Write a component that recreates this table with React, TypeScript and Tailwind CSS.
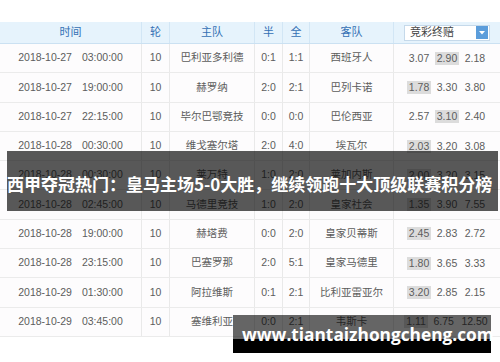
import React from "react";

type Row = {
  date: string;
  time: string;
  home: string;
  half: string;
  full: string;
  away: string;
  odds: [string, string, string];
  hi: number;
};

const rows: Row[] = [
  { date: "2018-10-27", time: "03:00:00", home: "巴利亚多利德", half: "0:1", full: "1:1", away: "西班牙人", odds: ["3.07", "2.90", "2.18"], hi: 1 },
  { date: "2018-10-27", time: "19:00:00", home: "赫罗纳", half: "2:0", full: "2:1", away: "巴列卡诺", odds: ["1.78", "3.30", "3.80"], hi: 0 },
  { date: "2018-10-27", time: "22:15:00", home: "毕尔巴鄂竞技", half: "0:0", full: "0:0", away: "巴伦西亚", odds: ["2.57", "3.10", "2.40"], hi: 1 },
  { date: "2018-10-28", time: "00:30:00", home: "维戈塞尔塔", half: "2:0", full: "4:0", away: "埃瓦尔", odds: ["2.03", "3.20", "3.08"], hi: 0 },
  { date: "2018-10-28", time: "00:30:00", home: "莱万特", half: "1:0", full: "2:0", away: "莱加内斯", odds: ["2.00", "3.20", "3.15"], hi: 0 },
  { date: "2018-10-28", time: "02:45:00", home: "马德里竞技", half: "1:0", full: "2:0", away: "皇家社会", odds: ["1.35", "3.90", "7.55"], hi: 0 },
  { date: "2018-10-28", time: "19:00:00", home: "赫塔费", half: "0:0", full: "2:0", away: "皇家贝蒂斯", odds: ["2.45", "2.83", "2.72"], hi: 0 },
  { date: "2018-10-28", time: "23:15:00", home: "巴塞罗那", half: "2:0", full: "5:1", away: "皇家马德里", odds: ["1.80", "3.65", "3.33"], hi: 0 },
  { date: "2018-10-29", time: "01:30:00", home: "阿拉维斯", half: "0:1", full: "2:1", away: "比利亚雷亚尔", odds: ["3.20", "2.85", "2.15"], hi: 0 },
  { date: "2018-10-29", time: "03:45:00", home: "塞维利亚", half: "0:0", full: "2:1", away: "韦斯卡", odds: ["1.11", "6.75", "12.50"], hi: 0 },
];

const cols = "grid grid-cols-[142px_28px_85px_28px_27px_84px_106px]";

export default function App() {
  return (
    <div className="relative w-[500px] h-[362px] bg-white overflow-hidden font-['Liberation_Sans','Noto_Sans_CJK_SC',sans-serif]">
      <div className="pt-[22px]">
        {/* header */}
        <div className={`${cols} h-[22px] bg-[#e6f3fc] border-b border-[#cbe1f2] text-[11px] text-[#3470b4]`}>
          {["时间", "轮", "主队", "半", "全", "客队"].map((h) => (
            <div key={h} className="flex items-center justify-center border-r border-[#d2e6f5]">
              {h}
            </div>
          ))}
          <div className="flex items-center justify-center">
            <div className="flex items-center justify-between w-[86px] h-[16px] bg-white border border-[#c5d9ea] pl-[5px] pr-[1px]">
              <span className="text-[11px] text-[#444]">竞彩终赔</span>
              <span className="flex items-center justify-center w-[12px] h-[13px] bg-[#5b9ddb]">
                <svg width="6" height="4" viewBox="0 0 6 4">
                  <polygon points="0,0 6,0 3,3.5" fill="#fff" />
                </svg>
              </span>
            </div>
          </div>
        </div>
        {/* body */}
        {rows.map((r, i) => (
          <div
            key={i}
            className={`${cols} h-[29.3px] border-b border-[#ebebeb] bg-[#fdfcfd] text-[10.5px] text-[#5c5c5c]`}
          >
            <div className="flex items-center justify-center gap-[10px] border-r border-[#e9e9e9]">
              <span>{r.date}</span>
              <span>{r.time}</span>
            </div>
            <div className="flex items-center justify-center border-r border-[#e9e9e9]">10</div>
            <div className="flex items-center justify-center border-r border-[#e9e9e9]">{r.home}</div>
            <div className="flex items-center justify-center border-r border-[#e9e9e9]">{r.half}</div>
            <div className="flex items-center justify-center border-r border-[#e9e9e9]">{r.full}</div>
            <div className="flex items-center justify-center border-r border-[#e9e9e9]">{r.away}</div>
            <div className="flex items-center justify-center gap-[3.5px]">
              {r.odds.map((o, j) => (
                <span
                  key={j}
                  className={`px-[2px] leading-[13px] ${j === r.hi ? "bg-[#dcdcdc]" : ""}`}
                >
                  {o}
                </span>
              ))}
            </div>
          </div>
        ))}
      </div>

      {/* headline banner */}
      <div className="absolute left-[7px] top-[151px] w-[491px] h-[60px] bg-black/65 pt-[24px] whitespace-nowrap text-white font-bold text-[17px] leading-[17px] font-['Noto_Sans_CJK_SC',sans-serif]">
        西甲夺冠热门：皇马主场5-0大胜，继续领跑十大顶级联赛积分榜
      </div>

      {/* watermark */}
      <div className="absolute left-[233px] top-[315px] w-[258px] h-[38px]">
        <div className="h-[24px] bg-black/60" />
        <div className="h-[14px] bg-black" />
        <span className="absolute left-[9px] top-[11px] whitespace-nowrap text-white font-bold text-[17.3px] leading-[17px] font-['Open_Sans',sans-serif]">
          www.tiantaizhongcheng.com
        </span>
      </div>
    </div>
  );
}
